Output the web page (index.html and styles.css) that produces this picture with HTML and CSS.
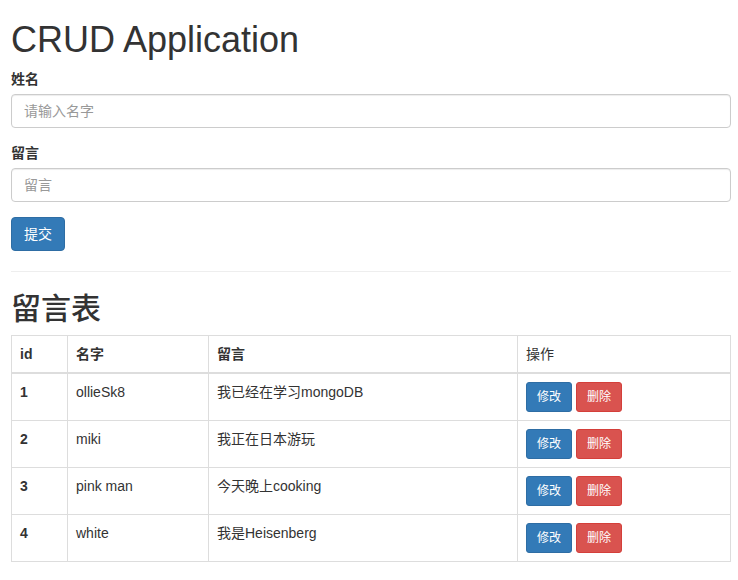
FILE: index.html
```html
<!DOCTYPE html>
<html lang="zh">
<head>
<meta charset="utf-8">
<title>CRUD Application</title>
<link rel="stylesheet" href="styles.css">
</head>
<body>
<div class="container">
  <h1 class="title">CRUD Application</h1>
  <form class="form">
    <div class="form-group">
      <label class="label">姓名</label>
      <input class="form-control" type="text" placeholder="请输入名字">
    </div>
    <div class="form-group">
      <label class="label">留言</label>
      <input class="form-control" type="text" placeholder="留言">
    </div>
    <button type="button" class="btn btn-primary">提交</button>
  </form>
  <hr class="divider">
  <h2 class="subtitle">留言表</h2>
  <table class="table">
    <thead>
      <tr>
        <th class="col-id">id</th>
        <th class="col-name">名字</th>
        <th class="col-msg">留言</th>
        <th class="col-act normal">操作</th>
      </tr>
    </thead>
    <tbody>
      <tr>
        <td class="bold">1</td><td>ollieSk8</td><td>我已经在学习mongoDB</td>
        <td><button class="btn btn-sm btn-primary">修改</button> <button class="btn btn-sm btn-danger">删除</button></td>
      </tr>
      <tr>
        <td class="bold">2</td><td>miki</td><td>我正在日本游玩</td>
        <td><button class="btn btn-sm btn-primary">修改</button> <button class="btn btn-sm btn-danger">删除</button></td>
      </tr>
      <tr>
        <td class="bold">3</td><td>pink man</td><td>今天晚上cooking</td>
        <td><button class="btn btn-sm btn-primary">修改</button> <button class="btn btn-sm btn-danger">删除</button></td>
      </tr>
      <tr>
        <td class="bold">4</td><td>white</td><td>我是Heisenberg</td>
        <td><button class="btn btn-sm btn-primary">修改</button> <button class="btn btn-sm btn-danger">删除</button></td>
      </tr>
    </tbody>
  </table>
</div>
</body>
</html>
```

FILE: styles.css
```css
* { box-sizing: border-box; }
html, body { margin: 0; padding: 0; background: #fff; }
body {
  font-family: "Liberation Sans", Arial, "Noto Sans CJK SC", sans-serif;
  font-size: 14px;
  line-height: 1.42857143;
  color: #333;
}
.container { padding: 0 7px 0 11px; width: 738px; }
.title {
  font-size: 36px;
  font-weight: 500;
  line-height: 1.1;
  margin: 20px 0 9.4px;
}
.form { margin: 0; }
.form-group { margin-bottom: 15px; }
.label {
  display: block;
  width: fit-content;
  height: 20px;
  line-height: 20px;
  margin-bottom: 5px;
  font-weight: 700;
}
.form-control {
  display: block;
  width: 100%;
  height: 34px;
  padding: 6px 12px;
  font-family: inherit;
  font-size: 14px;
  line-height: 1.42857143;
  color: #555;
  background: #fff;
  border: 1px solid #ccc;
  border-radius: 4px;
  box-shadow: inset 0 1px 1px rgba(0,0,0,.075);
  margin: 0;
}
.form-control::placeholder { color: #999; opacity: 1; }
.btn {
  display: inline-block;
  margin: 0;
  padding: 6px 12px;
  font-family: inherit;
  font-size: 14px;
  font-weight: 400;
  line-height: 1.42857143;
  text-align: center;
  white-space: nowrap;
  vertical-align: middle;
  border: 1px solid transparent;
  border-radius: 4px;
  cursor: pointer;
}
.btn-sm {
  padding: 5px 10px;
  font-size: 12px;
  line-height: 1.5;
  border-radius: 3px;
}
.btn-primary { color: #fff; background: #337ab7; border-color: #2e6da4; }
.btn-danger { color: #fff; background: #d9534f; border-color: #d43f3a; }
.divider {
  margin: 20px 0;
  border: 0;
  border-top: 1px solid #eee;
  height: 0;
}
.subtitle {
  font-size: 30px;
  font-weight: 500;
  line-height: 33px;
  height: 33px;
  margin: 20px 0 10px;
}
.table {
  width: 100%;
  border-collapse: collapse;
  border-spacing: 0;
  border: 1px solid #ddd;
  margin: 0;
}
.table th, .table td {
  padding: 8px;
  line-height: 1.42857143;
  vertical-align: top;
  border: 1px solid #ddd;
  text-align: left;
}
.table thead th {
  vertical-align: bottom;
  border-bottom-width: 2px;
  font-weight: 700;
}
.table thead th.normal { font-weight: 400; }
.col-id { width: 56px; }
.col-name { width: 141px; }
.col-msg { width: 309px; }
.bold { font-weight: 700; }
```
